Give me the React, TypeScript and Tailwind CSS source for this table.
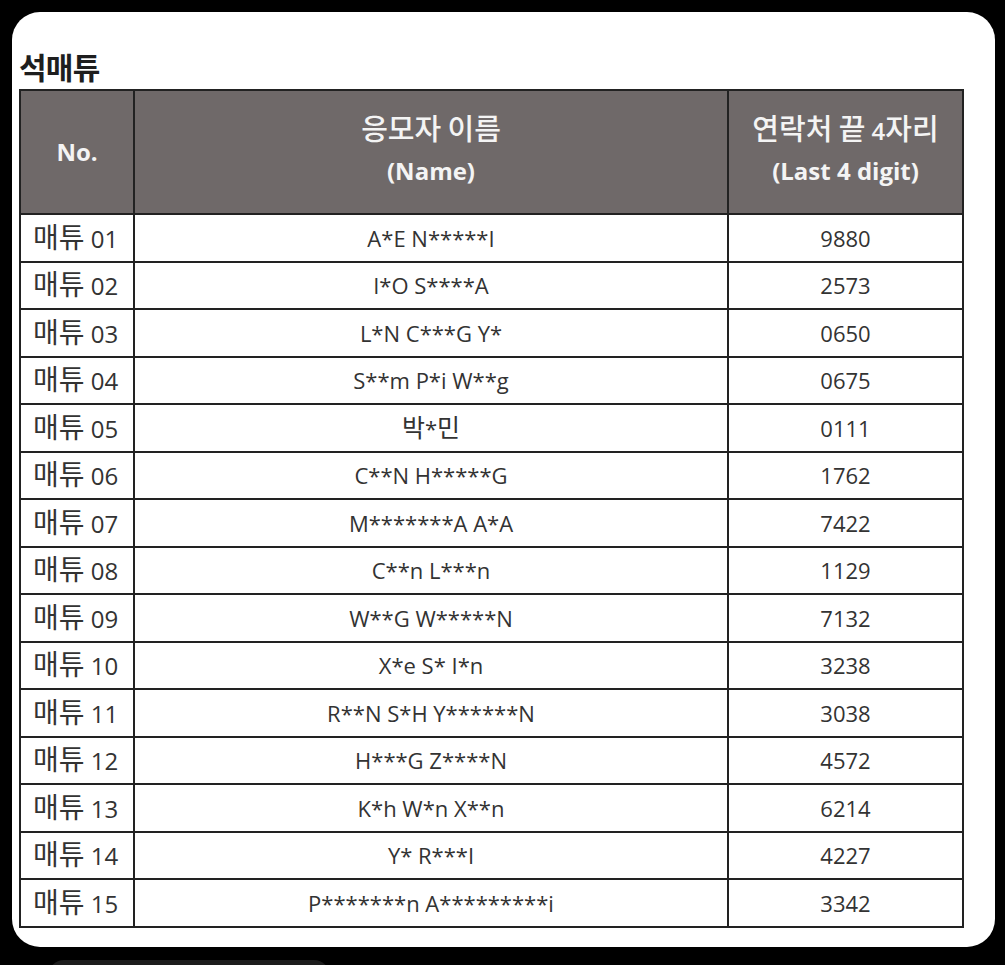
const rows: [string, string, string][] = [
  ['01', 'A*E N*****I', '9880'],
  ['02', 'I*O S****A', '2573'],
  ['03', 'L*N C***G Y*', '0650'],
  ['04', 'S**m P*i W**g', '0675'],
  ['05', '박*민', '0111'],
  ['06', 'C**N H*****G', '1762'],
  ['07', 'M*******A A*A', '7422'],
  ['08', 'C**n L***n', '1129'],
  ['09', 'W**G W*****N', '7132'],
  ['10', 'X*e S* I*n', '3238'],
  ['11', 'R**N S*H Y******N', '3038'],
  ['12', 'H***G Z****N', '4572'],
  ['13', 'K*h W*n X**n', '6214'],
  ['14', 'Y* R***I', '4227'],
  ['15', 'P*******n A*********i', '3342'],
]

const font = { fontFamily: '"Open Sans", "Noto Sans CJK KR", sans-serif' }

// Hangul runs get a bigger size, the Latin text around them keeps the cell size
function Mixed({ text, ko }: { text: string; ko: string }) {
  const parts = text.split(/([\uac00-\ud7a3]+)/)
  return (
    <>
      {parts.map((p, i) =>
        /[\uac00-\ud7a3]/.test(p) ? (
          <span key={i} className={ko}>
            {p}
          </span>
        ) : (
          p
        ),
      )}
    </>
  )
}

export default function App() {
  return (
    <div className="h-[965px] w-[1005px] overflow-hidden bg-black pt-3 pl-3" style={font}>
      <div className="h-[935px] w-[983px] rounded-[28px] bg-white pl-[7px] pt-[35px]">
        <h1 className="text-[30px] font-bold leading-[42px] tracking-tight text-[#1e1e1e]">석매튜</h1>
        <table className="w-[943px] table-fixed border-collapse border-2 border-[#222]">
          <colgroup>
            <col className="w-[114px]" />
            <col className="w-[594px]" />
            <col className="w-[235px]" />
          </colgroup>
          <thead>
            <tr className="h-[124px] bg-[#6f6969] text-[24px] font-bold leading-[40px] text-[#f4f4f4]">
              <th className="border-2 border-[#222]">No.</th>
              <th className="border-2 border-[#222]">
                <div className="font-medium">
                  <Mixed text="응모자 이름" ko="text-[29px]" />
                </div>
                <div className="pb-1">(Name)</div>
              </th>
              <th className="border-2 border-[#222]">
                <div className="font-semibold">
                  <Mixed text="연락처 끝 4자리" ko="text-[29px] font-medium" />
                </div>
                <div className="pb-1">(Last 4 digit)</div>
              </th>
            </tr>
          </thead>
          <tbody className="text-[22px] leading-[30px] text-[#333]">
            {rows.map(([no, name, digit]) => (
              <tr key={no} className="h-[47.5px]">
                <td className="border-2 border-[#222] pl-3 text-[24px]">
                  <span className="text-[28px]">매튜</span> {no}
                </td>
                <td className="border-2 border-[#222] text-center">
                  <Mixed text={name} ko="text-[25px]" />
                </td>
                <td className="border-2 border-[#222] text-center">{digit}</td>
              </tr>
            ))}
          </tbody>
        </table>
      </div>
      <div className="ml-[36px] mt-[13px] h-[40px] w-[282px] rounded-[16px] bg-[#1c1c1c]" />
    </div>
  )
}
